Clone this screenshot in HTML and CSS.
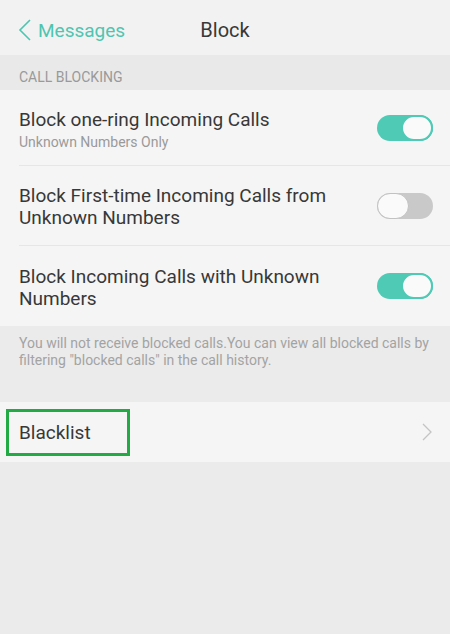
FILE: index.html
```html
<!DOCTYPE html>
<html lang="en">
<head>
    <meta charset="UTF-8">
    <meta name="viewport" content="width=device-width, initial-scale=1.0">
    <title>Block</title>
    <link rel="stylesheet" href="styles.css">
</head>
<body>
    <header class="topbar">
        <a class="back" href="#">
            <svg class="back-icon" width="14" height="22" viewBox="0 0 14 22">
                <path d="M12 1 L2 11 L12 21" fill="none" stroke="#4ec5b0" stroke-width="1.6"/>
            </svg>
            <span>Messages</span>
        </a>
        <h1 class="title">Block</h1>
    </header>

    <div class="group-label">CALL BLOCKING</div>

    <!-- Switch rows -->
    <div class="list">
        <div class="row">
            <div class="row-text">
                <div class="row-title">Block one-ring Incoming Calls</div>
                <div class="row-sub">Unknown Numbers Only</div>
            </div>
            <span class="switch on"><span class="knob"></span></span>
        </div>
        <div class="row">
            <div class="row-text">
                <div class="row-title">Block First-time Incoming Calls from Unknown Numbers</div>
            </div>
            <span class="switch"><span class="knob"></span></span>
        </div>
        <div class="row">
            <div class="row-text">
                <div class="row-title">Block Incoming Calls with Unknown Numbers</div>
            </div>
            <span class="switch on"><span class="knob"></span></span>
        </div>
    </div>

    <p class="note">You will not receive blocked calls.You can view all blocked calls by filtering "blocked calls" in the call history.</p>

    <div class="link-row">
        <span class="highlight">Blacklist</span>
        <svg class="chevron" width="10" height="18" viewBox="0 0 10 18">
            <path d="M1 1 L9 9 L1 17" fill="none" stroke="#c4c4c4" stroke-width="1.3"/>
        </svg>
    </div>
</body>
</html>
```

FILE: styles.css
```css
body {
    margin: 0;
    font-family: Roboto, "Noto Sans", sans-serif;
    background-color: #ebebeb;
    color: #383838;
}
.topbar {
    height: 55px;
    box-sizing: border-box;
    padding-top: 5px;
    background-color: #f2f2f2;
    display: flex;
    align-items: center;
    position: relative;
}
.back {
    display: flex;
    align-items: center;
    padding-left: 18px;
    color: #4ec5b0;
    text-decoration: none;
    font-size: 19px;
    gap: 6px;
}
.title {
    position: absolute;
    left: 0;
    right: 0;
    margin: 0;
    text-align: center;
    font-size: 20px;
    font-weight: normal;
    color: #383838;
    pointer-events: none;
}
.group-label {
    height: 35px;
    box-sizing: border-box;
    padding: 14px 19px 0;
    font-size: 14px;
    color: #999;
    background-color: #e9e9e9;
}
.list {
    background-color: #f5f5f5;
}
.row {
    display: flex;
    align-items: center;
    height: 80px;
    margin-left: 19px;
    padding-right: 17px;
    padding-top: 3px;
    border-bottom: 1px solid #e6e6e6;
    box-sizing: border-box;
}
.row:first-child {
    height: 76px;
}
.row:last-child {
    border-bottom: none;
}
.row-text {
    flex: 1;
    padding-right: 40px;
}
.row-title {
    font-size: 19px;
    line-height: 22px;
}
.row-sub {
    font-size: 14px;
    color: #9a9a9a;
    margin-top: 3px;
}
.switch {
    width: 56px;
    height: 26px;
    border-radius: 13px;
    background-color: #c9c9c9;
    position: relative;
    flex-shrink: 0;
    margin-top: -3px;
}
.switch .knob {
    position: absolute;
    top: 0;
    left: 0;
    width: 32px;
    height: 26px;
    box-sizing: border-box;
    border-radius: 13px;
    background-color: #fafafa;
    border: 1px solid #c2c2c2;
}
.switch.on {
    background-color: #4ecab5;
}
.switch.on .knob {
    left: auto;
    right: 0;
    border: 2px solid #4ecab5;
}
.note {
    margin: 0;
    height: 76px;
    box-sizing: border-box;
    padding: 9px 19px 0;
    font-size: 14px;
    line-height: 17px;
    color: #a3a3a3;
}
.link-row {
    height: 60px;
    background-color: #f5f5f5;
    display: flex;
    align-items: center;
    justify-content: space-between;
    padding-right: 18px;
}
.highlight {
    margin-left: 6px;
    width: 124px;
    height: 47px;
    box-sizing: border-box;
    border: 3px solid #22ab45;
    display: flex;
    align-items: center;
    padding-left: 10px;
    font-size: 19px;
}
```
